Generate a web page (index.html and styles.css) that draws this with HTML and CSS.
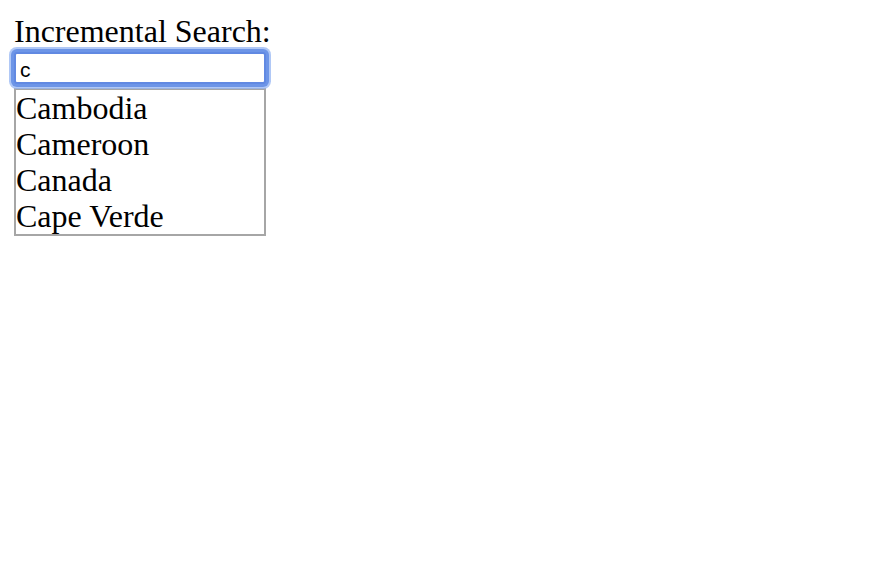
FILE: index.html
```html
<!DOCTYPE html>
<html>
<head>
<meta charset="utf-8">
<title>Incremental Search</title>
<link rel="stylesheet" href="styles.css">
</head>
<body>
<div class="search">
  <label class="search-label" for="q">Incremental Search:</label>
  <input class="search-input" id="q" type="text" value="c">
  <ul class="results">
    <li>Cambodia</li>
    <li>Cameroon</li>
    <li>Canada</li>
    <li>Cape Verde</li>
  </ul>
</div>
</body>
</html>
```

FILE: styles.css
```css
html, body {
  margin: 0;
  padding: 0;
  background: #ffffff;
}
body {
  padding: 13px 14px;
  font-family: "Liberation Serif", "Times New Roman", serif;
  color: #000000;
}
.search {
  display: flex;
  flex-direction: column;
  align-items: flex-start;
  width: 252px;
}
.search-label {
  font-size: 32px;
  line-height: 36px;
  white-space: nowrap;
}
.search-input {
  position: relative;
  z-index: 1;
  box-sizing: border-box;
  width: 252px;
  height: 32px;
  margin: 3px 0 0 0;
  padding: 4px 0 0 4px;
  border: 2px solid #6189e2;
  border-radius: 3px;
  outline: none;
  box-shadow: 0 0 0 3px #6d95e7, 0 0 0 5px rgba(150, 182, 243, 0.75);
  font-family: "Liberation Sans", Arial, sans-serif;
  font-size: 21px;
  color: #000000;
  background: #ffffff;
}
.results {
  box-sizing: border-box;
  width: 252px;
  margin: 4px 0 0 0;
  padding: 0;
  list-style: none;
  border: 2px solid #a6a6a6;
  font-size: 32px;
  line-height: 36px;
}
.results li {
  margin: 0;
  padding: 0;
  white-space: nowrap;
}
```
